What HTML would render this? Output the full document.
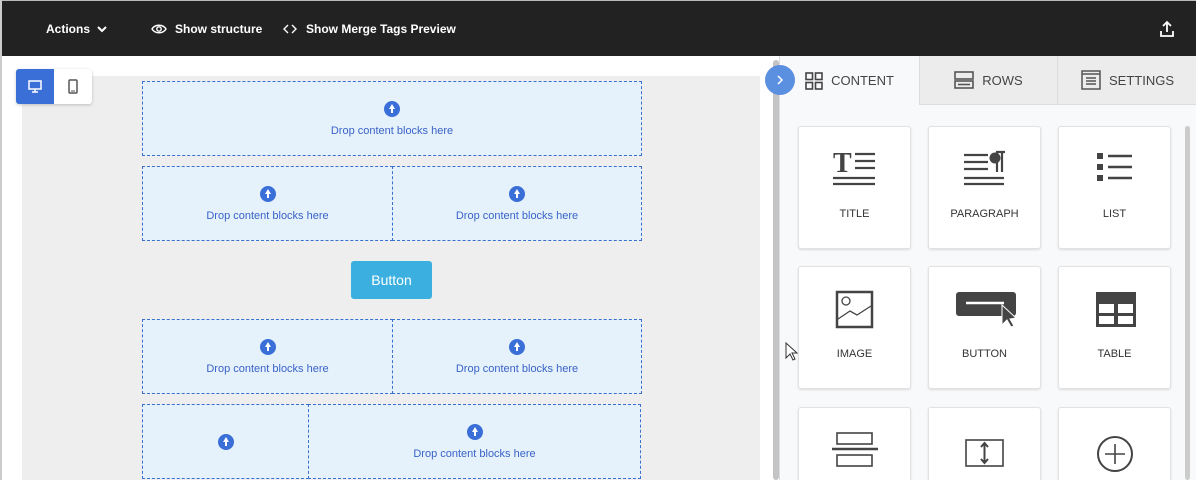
<!DOCTYPE html>
<html style="overflow:hidden;width:1196px;height:480px"><head><style>
*{box-sizing:border-box;margin:0;padding:0}
body{width:1196px;height:480px;overflow:hidden;position:relative;background:#fff;font-family:"Liberation Sans",sans-serif}
.top{position:absolute;left:0;top:0;width:1196px;height:56px;background:#222;border-top:1px solid #bbb;color:#fff;font-size:12px;font-weight:bold}
.top span{position:absolute;top:21px}
.canvas{position:absolute;left:22px;top:76px;width:738px;height:404px;background:#eee}
.dz{position:absolute;background:#e5f2fc;border:1px dashed #3a6fd0;color:#3a62c8;font-size:11px;text-align:center}
.dz .ic{width:16px;height:16px;border-radius:50%;background:#3a6fd8;margin:0 auto 8px;position:relative}
.dz .ic:after{content:"";position:absolute;left:5px;top:3px;border-left:3px solid transparent;border-right:3px solid transparent;border-bottom:5px solid #fff}
.dz .ic:before{content:"";position:absolute;left:7px;top:7px;width:2px;height:5px;background:#fff}
.panel{position:absolute;left:779px;top:56px;width:417px;height:424px;background:#f8f9fb;border-left:1px solid #ddd;overflow:hidden}
.tab{position:absolute;top:0;height:49px;font-size:13px;color:#444;display:flex;align-items:center;justify-content:center;gap:8px}
.card{position:absolute;width:113px;height:123px;background:#fff;border:1px solid #e2e2e2;border-radius:3px;box-shadow:0 1px 2px rgba(0,0,0,.12);font-size:11px;color:#333;text-align:center}
.card svg{position:absolute;left:34px;top:22px}
.card .l{position:absolute;top:81px;width:100%}
</style></head><body>
<div class="top">
<span style="left:46px">Actions <svg width="10" height="8" viewBox="0 0 10 8" style="margin-left:4px"><path d="M1 2l4 4 4-4" stroke="#fff" stroke-width="2" fill="none"/></svg></span>
<svg style="position:absolute;left:151px;top:22px" width="16" height="12" viewBox="0 0 16 12"><path d="M1 6C4 1 12 1 15 6C12 11 4 11 1 6Z" stroke="#fff" stroke-width="1.4" fill="none"/><circle cx="8" cy="6" r="2.2" stroke="#fff" stroke-width="1.4" fill="none"/></svg>
<span style="left:175px">Show structure</span>
<svg style="position:absolute;left:283px;top:22px" width="14" height="12" viewBox="0 0 14 12"><path d="M5 2L1 6l4 4M9 2l4 4-4 4" stroke="#fff" stroke-width="1.4" fill="none"/></svg>
<span style="left:306px">Show Merge Tags Preview</span>
<svg style="position:absolute;left:1159px;top:19px" width="16" height="18" viewBox="0 0 16 18"><path d="M8 12V2M4 6l4-4 4 4M2 11v5h12v-5" stroke="#fff" stroke-width="1.8" fill="none"/></svg>
</div>
<div style="position:absolute;left:0;top:0;width:2px;height:480px;background:#ccc"></div>
<div class="canvas"></div>
<div style="position:absolute;left:16px;top:69px;width:76px;height:35px;background:#fff;border-radius:3px;box-shadow:0 1px 3px rgba(0,0,0,.2)"></div>
<div style="position:absolute;left:16px;top:69px;width:38px;height:35px;background:#3a6fd8;border-radius:3px 0 0 3px"></div>
<svg style="position:absolute;left:28px;top:80px" width="14" height="13" viewBox="0 0 14 13"><rect x="1" y="1" width="12" height="8" stroke="#fff" stroke-width="1.5" fill="none"/><path d="M7 9v3M4 12h6" stroke="#fff" stroke-width="1.5"/></svg>
<svg style="position:absolute;left:68px;top:79px" width="10" height="15" viewBox="0 0 10 15"><rect x="1" y="1" width="8" height="13" rx="1" stroke="#555" stroke-width="1.5" fill="none"/><path d="M3 12h4" stroke="#555"/></svg>

<div class="dz" style="left:142px;top:81px;width:500px;height:75px;padding-top:19px"><div class="ic"></div>Drop content blocks here</div>
<div class="dz" style="left:142px;top:166px;width:251px;height:75px;padding-top:19px"><div class="ic"></div>Drop content blocks here</div>
<div class="dz" style="left:392px;top:166px;width:250px;height:75px;padding-top:19px"><div class="ic"></div>Drop content blocks here</div>
<div style="position:absolute;left:351px;top:261px;width:81px;height:38px;background:#3bb0e0;border-radius:3px;color:#fff;font-size:14px;text-align:center;line-height:38px">Button</div>
<div class="dz" style="left:142px;top:319px;width:251px;height:75px;padding-top:19px"><div class="ic"></div>Drop content blocks here</div>
<div class="dz" style="left:392px;top:319px;width:250px;height:75px;padding-top:19px"><div class="ic"></div>Drop content blocks here</div>
<div class="dz" style="left:142px;top:404px;width:167px;height:75px;padding-top:29px"><div class="ic"></div></div>
<div class="dz" style="left:308px;top:404px;width:333px;height:75px;padding-top:19px"><div class="ic"></div>Drop content blocks here</div>

<div style="position:absolute;left:773px;top:60px;width:6px;height:420px;background:#c4c4c4;border-radius:3px"></div>
<div class="panel">
<div class="tab" style="left:0;width:139px;background:#f8f9fb"><svg width="18" height="18" viewBox="0 0 18 18" fill="none" stroke="#444" stroke-width="1.6"><rect x="1" y="1" width="6.5" height="6.5"/><rect x="10.5" y="1" width="6.5" height="6.5"/><rect x="1" y="10.5" width="6.5" height="6.5"/><rect x="10.5" y="10.5" width="6.5" height="6.5"/></svg>CONTENT</div>
<div class="tab" style="left:139px;width:138px;background:#ececec;border-bottom:1px solid #ddd;border-left:1px solid #ddd"><svg width="20" height="18" viewBox="0 0 20 18" fill="none" stroke="#555" stroke-width="1.6"><rect x="1" y="1" width="18" height="7"/><rect x="1" y="10" width="18" height="7"/><path d="M4 13.5h12"/></svg>ROWS</div>
<div class="tab" style="left:277px;width:140px;background:#ececec;border-bottom:1px solid #ddd;border-left:1px solid #ddd"><svg width="20" height="20" viewBox="0 0 20 20" fill="none" stroke="#555" stroke-width="1.5"><rect x="1" y="1" width="18" height="18"/><path d="M1 4h18M5 8h10M5 11h10M5 14h10"/></svg>SETTINGS</div>
<div style="position:absolute;left:405px;top:70px;width:5px;height:354px;background:#ccc;border-radius:3px"></div>

<div class="card" style="left:18px;top:70px"><svg width="44" height="38" viewBox="0 0 44 38"><text x="0" y="23" font-family="Liberation Serif" font-weight="bold" font-size="28" fill="#444">T</text><path d="M22 5h20M22 12h20M22 19h20M0 29h42M0 35h42" stroke="#444" stroke-width="2.2"/></svg><div class="l">TITLE</div></div>
<div class="card" style="left:148px;top:70px"><svg width="44" height="38" viewBox="0 0 44 38"><path d="M1 6h24M1 13h24M1 20h24M1 29h40M1 35h40" stroke="#444" stroke-width="2.2"/><path d="M33 3h9M34 3v20M39 3v20" stroke="#444" stroke-width="2.2"/><circle cx="32" cy="9" r="5.5" fill="#444"/></svg><div class="l">PARAGRAPH</div></div>
<div class="card" style="left:278px;top:70px"><svg width="44" height="38" viewBox="0 0 44 38"><rect x="4" y="4" width="6" height="6" fill="#444"/><rect x="4" y="15" width="6" height="6" fill="#444"/><rect x="4" y="26" width="6" height="6" fill="#444"/><path d="M15 7h24M15 18h24M15 29h24" stroke="#444" stroke-width="2.5"/></svg><div class="l">LIST</div></div>

<div class="card" style="left:18px;top:210px"><svg width="44" height="40" viewBox="0 0 44 40"><rect x="4" y="3" width="35" height="35" stroke="#444" stroke-width="2.5" fill="none"/><circle cx="13" cy="12" r="4" stroke="#444" stroke-width="1.3" fill="none"/><path d="M5 30l12-8 7 4 14-9" stroke="#444" stroke-width="1.3" fill="none"/></svg><div class="l">IMAGE</div></div>
<div class="card" style="left:148px;top:210px"><svg width="64" height="40" viewBox="0 0 64 40" style="left:25px"><rect x="2" y="3" width="60" height="24" rx="3" fill="#444"/><path d="M12 14h38" stroke="#fff" stroke-width="2.5"/><path d="M48 16v20l5-5 4 7 3-1-4-7 6-1z" fill="#444" stroke="#fff" stroke-width="1"/></svg><div class="l">BUTTON</div></div>
<div class="card" style="left:278px;top:210px"><svg width="44" height="40" viewBox="0 0 44 40"><rect x="3" y="3" width="40" height="35" fill="#444"/><rect x="6" y="15" width="15" height="9" fill="#fff"/><rect x="25" y="15" width="15" height="9" fill="#fff"/><rect x="6" y="27" width="15" height="8" fill="#fff"/><rect x="25" y="27" width="15" height="8" fill="#fff"/></svg><div class="l">TABLE</div></div>

<div class="card" style="left:18px;top:351px"><svg width="48" height="44" viewBox="0 0 48 44" style="left:32px"><rect x="6" y="3" width="35" height="11" stroke="#444" stroke-width="1.6" fill="none"/><path d="M1 19h46" stroke="#444" stroke-width="2.5"/><rect x="6" y="25" width="35" height="11" stroke="#444" stroke-width="1.6" fill="none"/></svg></div>
<div class="card" style="left:148px;top:351px"><svg width="44" height="44" viewBox="0 0 44 44"><rect x="3" y="10" width="37" height="26" stroke="#444" stroke-width="1.6" fill="none"/><path d="M21.5 14v18M18 17l3.5-4 3.5 4M18 29l3.5 4 3.5-4" stroke="#444" stroke-width="2" fill="none"/></svg></div>
<div class="card" style="left:278px;top:351px"><svg width="44" height="44" viewBox="0 0 44 44"><circle cx="22" cy="24" r="17" stroke="#444" stroke-width="2" fill="none"/><path d="M22 14v20M12 24h20" stroke="#444" stroke-width="1.6"/></svg></div>
</div>
<div style="position:absolute;left:765px;top:65px;width:30px;height:30px;border-radius:50%;background:#5b8fe0"></div>
<svg style="position:absolute;left:776px;top:75px" width="8" height="10" viewBox="0 0 8 10"><path d="M2 1l4 4-4 4" stroke="#fff" stroke-width="1.5" fill="none"/></svg>
<svg style="position:absolute;left:785px;top:342px" width="14" height="20" viewBox="0 0 14 20"><path d="M1 1v15l4-4 3 6 2-1-3-6h5z" fill="#fff" stroke="#333" stroke-width="1"/></svg>
</body></html>
